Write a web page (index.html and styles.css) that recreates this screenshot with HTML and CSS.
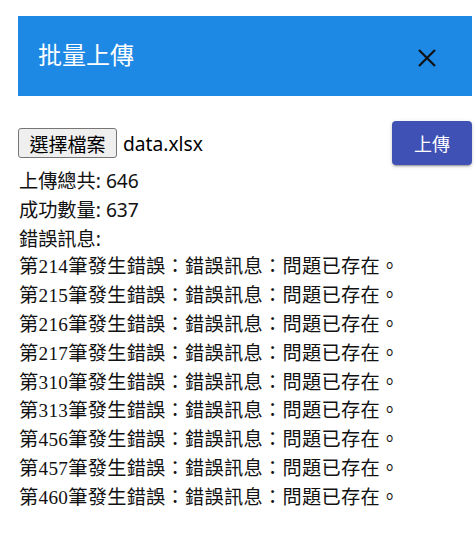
FILE: index.html
```html
<!DOCTYPE html>
<html lang="zh-Hant">
<head>
<meta charset="utf-8">
<title>批量上傳</title>
<link rel="stylesheet" href="styles.css">
</head>
<body>
<div class="dialog">
  <header class="dialog-header">
    <h2 class="dialog-title">批量上傳</h2>
    <button class="close-btn" aria-label="close">
      <svg width="18" height="18" viewBox="0 0 18 18"><path d="M1 1 L17 17 M17 1 L1 17" stroke="#111" stroke-width="2.2" fill="none"/></svg>
    </button>
  </header>
  <div class="dialog-content">
    <div class="upload-row">
      <div class="file-input">
        <button class="file-btn">選擇檔案</button>
        <span class="file-name">data.xlsx</span>
      </div>
      <button class="upload-btn">上傳</button>
    </div>
    <div class="result">
      <div class="line">上傳總共: 646</div>
      <div class="line">成功數量: 637</div>
      <div class="line">錯誤訊息:</div>
      <div class="line err">第214筆發生錯誤：錯誤訊息：問題已存在。</div>
      <div class="line err">第215筆發生錯誤：錯誤訊息：問題已存在。</div>
      <div class="line err">第216筆發生錯誤：錯誤訊息：問題已存在。</div>
      <div class="line err">第217筆發生錯誤：錯誤訊息：問題已存在。</div>
      <div class="line err">第310筆發生錯誤：錯誤訊息：問題已存在。</div>
      <div class="line err">第313筆發生錯誤：錯誤訊息：問題已存在。</div>
      <div class="line err">第456筆發生錯誤：錯誤訊息：問題已存在。</div>
      <div class="line err">第457筆發生錯誤：錯誤訊息：問題已存在。</div>
      <div class="line err">第460筆發生錯誤：錯誤訊息：問題已存在。</div>
    </div>
  </div>
</div>
</body>
</html>
```

FILE: styles.css
```css
html, body {
  margin: 0;
  padding: 0;
  background: #fff;
}
body {
  font-family: "Noto Sans", "Noto Sans CJK TC", sans-serif;
  color: #111;
  padding: 16px 4px 0 18px;
}
.dialog {
  width: 454px;
}
.dialog-header {
  height: 80px;
  background: #1e88e5;
  display: flex;
  align-items: center;
  justify-content: space-between;
  padding: 0 36px 0 20px;
  box-sizing: border-box;
}
.dialog-title {
  margin: 0 0 3px 0;
  font-weight: 400;
  font-size: 24px;
  line-height: 1.2;
  color: #fff;
  font-family: "Noto Sans CJK TC", sans-serif;
}
.close-btn {
  background: none;
  border: 0;
  padding: 0;
  width: 18px;
  height: 18px;
  display: block;
  cursor: pointer;
  margin-top: 4px;
}
.close-btn svg { display: block; }
.dialog-content {
  padding-top: 25px;
}
.upload-row {
  display: flex;
  align-items: center;
  justify-content: space-between;
  height: 44px;
}
.file-input {
  display: flex;
  align-items: center;
  gap: 6px;
}
.file-btn {
  height: 30px;
  width: 99px;
  padding: 0;
  box-sizing: border-box;
  background: #efefef;
  border: 1px solid #767676;
  border-radius: 3px;
  font-family: "Noto Sans CJK TC", sans-serif;
  font-size: 19px;
  line-height: 1;
  color: #000;
}
.file-name {
  font-family: "Noto Sans", sans-serif;
  font-size: 19.2px;
  color: #000;
}
.upload-btn {
  width: 80px;
  height: 44px;
  background: #3f51b5;
  color: #fff;
  border: 0;
  border-radius: 4px;
  font-family: "Noto Sans CJK TC", sans-serif;
  font-size: 18px;
  padding: 0;
  box-shadow: 0 3px 1px -2px rgba(0,0,0,.2), 0 2px 2px 0 rgba(0,0,0,.14), 0 1px 5px 0 rgba(0,0,0,.12);
}
.result {
  margin-top: 2px;
  padding-left: 1px;
}
.line {
  font-size: 19.2px;
  line-height: 28.8px;
  white-space: nowrap;
}
.err {
  font-family: "Liberation Serif", "Noto Sans CJK TC", serif;
  letter-spacing: 0.3px;
}
```
